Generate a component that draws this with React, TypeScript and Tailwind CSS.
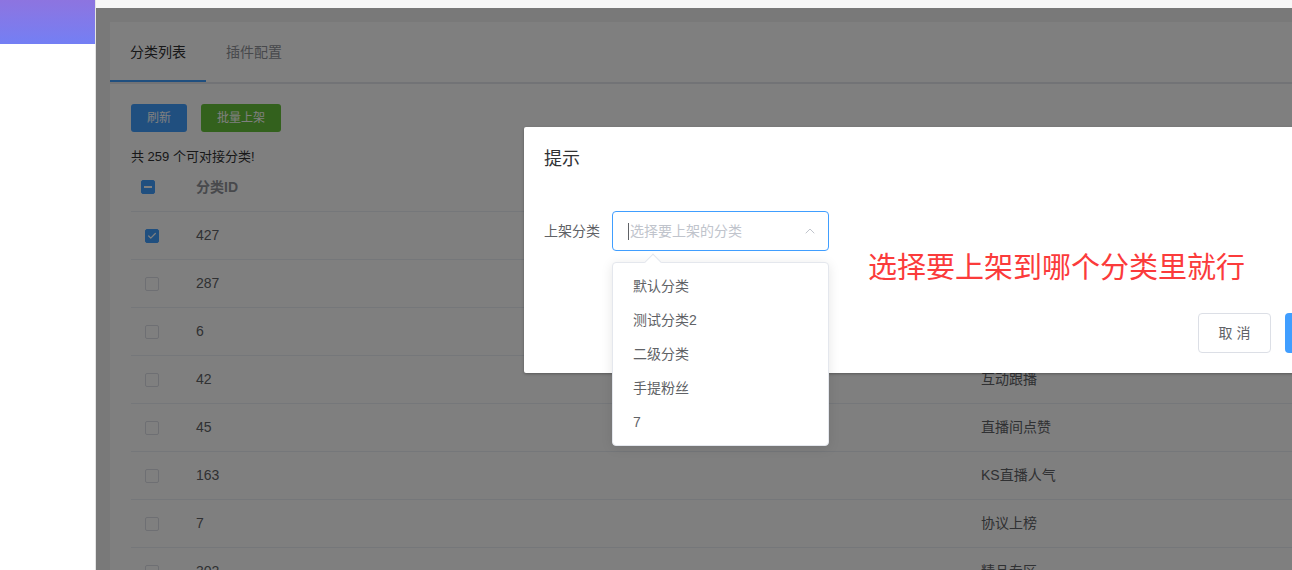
import { ChevronUp, Check } from 'lucide-react';

const font = { fontFamily: '"Liberation Sans", "Noto Sans CJK SC", sans-serif' };

const rows = [
    { id: '427', name: '', checked: true },
    { id: '287', name: '' },
    { id: '6', name: '' },
    { id: '42', name: '互动跟播' },
    { id: '45', name: '直播间点赞' },
    { id: '163', name: 'KS直播人气' },
    { id: '7', name: '协议上榜' },
    { id: '302', name: '精品专区' },
];

const options = ['默认分类', '测试分类2', '二级分类', '手提粉丝', '7'];

function Checkbox({ state }: { state?: 'checked' | 'half' }) {
    if (state === 'checked') {
        return (
            <span className="w-[14px] h-[14px] rounded-[2px] bg-[#409eff] border border-[#409eff] flex items-center justify-center">
                <Check className="w-[10px] h-[10px] text-white" strokeWidth={3} />
            </span>
        );
    }
    if (state === 'half') {
        return (
            <span className="w-[14px] h-[14px] rounded-[2px] bg-[#409eff] border border-[#409eff] flex items-center justify-center">
                <span className="w-[8px] h-[2px] bg-white" />
            </span>
        );
    }
    return <span className="w-[14px] h-[14px] rounded-[2px] bg-white border border-[#dcdfe6] block" />;
}

export default function App() {
    return (
        <div className="relative w-[1292px] h-[570px] overflow-hidden flex bg-white" style={font}>
            {/* sidebar */}
            <div className="w-[96px] shrink-0 bg-white border-r border-[#e4e4e4] flex flex-col">
                <div className="h-[44px] bg-linear-to-b from-[#8d74e0] to-[#737ff4]" />
            </div>

            {/* main */}
            <div className="flex-1 flex flex-col min-w-0">
                <div className="h-[8px] bg-[#f7f7f7] shrink-0" />
                <div className="flex-1 bg-[#f3f3f3] pl-[14px] pt-[14px]">
                    <div className="bg-white h-full">
                        {/* tabs */}
                        <div className="h-[62px] border-b-2 border-[#e4e7ed] flex text-[14px]">
                            <div className="relative h-[60px] px-5 flex items-center text-[#303133]">
                                分类列表
                                <span className="absolute left-0 right-0 bottom-0 h-[2px] bg-[#409eff]" />
                            </div>
                            <div className="h-[60px] px-5 flex items-center text-[#909399]">插件配置</div>
                        </div>

                        <div className="pl-[21px] pt-[20px]">
                            <div className="flex gap-[14px]">
                                <button className="w-[56px] h-[28px] rounded-[3px] bg-[#409eff] text-white text-[12px]">刷新</button>
                                <button className="w-[80px] h-[28px] rounded-[3px] bg-[#67c23a] text-white text-[12px]">批量上架</button>
                            </div>
                            <div className="mt-[16px] h-[15px] leading-[18px] text-[13px] text-[#303133]">共 259 个可对接分类!</div>

                            <div className="text-[14px]">
                                <div className="h-[49px] border-b border-[#ebeef5] grid grid-cols-[65px_785px_1fr] items-center">
                                    <div className="pl-[10px]"><Checkbox state="half" /></div>
                                    <div className="font-bold text-[#909399]">分类ID</div>
                                    <div />
                                </div>
                                {rows.map((r) => (
                                    <div key={r.id} className="h-[48px] border-b border-[#ebeef5] grid grid-cols-[65px_785px_1fr] items-center text-[#606266]">
                                        <div className="pl-[14px]"><Checkbox state={r.checked ? 'checked' : undefined} /></div>
                                        <div>{r.id}</div>
                                        <div>{r.name}</div>
                                    </div>
                                ))}
                            </div>
                        </div>
                    </div>
                </div>
            </div>

            {/* modal mask */}
            <div className="absolute left-[96px] top-[8px] right-0 bottom-0 bg-black/50" />

            {/* dialog */}
            <div className="absolute left-[524px] top-[127px] w-[880px] bg-white rounded-[2px] shadow-[0_1px_3px_rgba(0,0,0,0.3)]">
                <div className="pt-[20px] px-[20px] pb-[10px]">
                    <div className="text-[18px] leading-[24px] text-[#303133]">提示</div>
                </div>
                <div className="pt-[30px] pb-[30px] px-[20px]">
                    <div className="flex items-center mb-[22px]">
                        <label className="w-[68px] pr-[12px] text-[14px] text-[#606266] leading-[40px]">上架分类</label>
                        <div className="relative w-[217px] h-[40px] border border-[#409eff] rounded-[4px] flex items-center pl-[15px] pr-[10px]">
                            <span className="w-px h-[17px] bg-[#606266] mr-px" />
                            <span className="flex-1 text-[14px] text-[#c0c4cc]">选择要上架的分类</span>
                            <ChevronUp className="w-[16px] h-[16px] text-[#c0c4cc]" strokeWidth={1.5} />

                            {/* dropdown */}
                            <div className="absolute left-[-1px] top-[50px] w-[217px] bg-white border border-[#e4e7ed] rounded-[4px] shadow-[0_2px_12px_rgba(0,0,0,0.1)] py-[6px] z-10">
                                <span className="absolute top-[-7px] left-[34px] w-[12px] h-[12px] bg-white border-l border-t border-[#e4e7ed] rotate-45" />
                                {options.map((o) => (
                                    <div key={o} className="h-[34px] leading-[34px] px-[20px] text-[14px] text-[#606266]">{o}</div>
                                ))}
                            </div>
                        </div>
                    </div>
                </div>
                <div className="pt-[10px] pl-[674px] pb-[20px] flex gap-[14px]">
                    <button className="h-[40px] w-[73px] border border-[#dcdfe6] rounded-[4px] text-[14px] text-[#606266] bg-white">取 消</button>
                    <button className="h-[40px] w-[73px] rounded-[4px] text-[14px] text-white bg-[#409eff]">确 定</button>
                </div>
            </div>

            {/* annotation */}
            <div className="absolute left-[868px] top-[254px] text-[29px] leading-[29px] text-[#fb3b3b] whitespace-nowrap">
                选择要上架到哪个分类里就行
            </div>
        </div>
    );
}
